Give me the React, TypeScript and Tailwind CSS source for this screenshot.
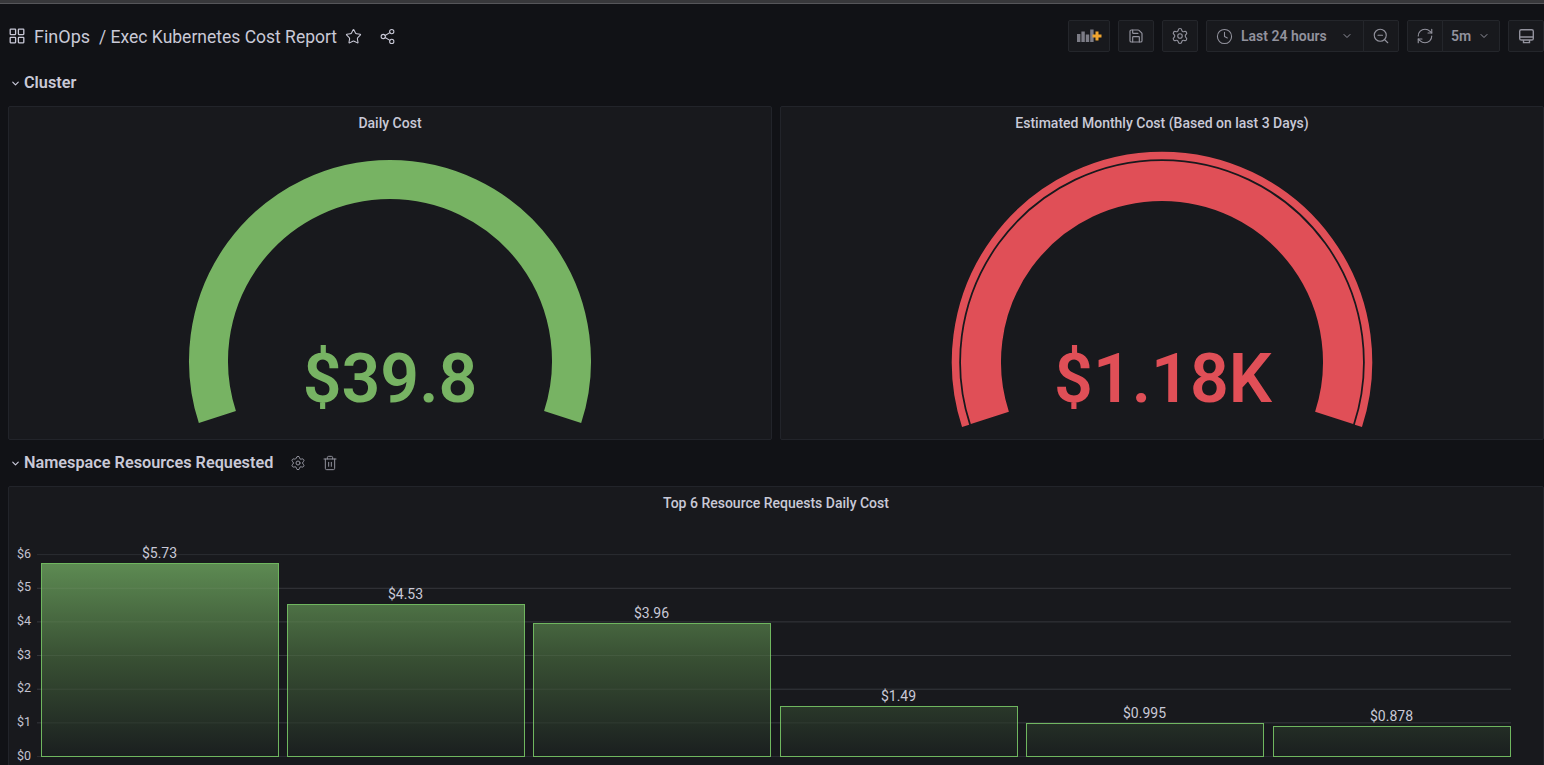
import { ChevronDown, Clock, RefreshCw, Save, Settings, Share2, Star, Trash2, ZoomOut } from "lucide-react";
import type { ReactNode } from "react";

const font = "[font-family:Roboto,'Liberation_Sans',sans-serif]";

const BARS = [
  { x: 41, w: 237, value: 5.75, label: "$5.73" },
  { x: 287, w: 237, value: 4.53, label: "$4.53" },
  { x: 533, w: 237, value: 3.96, label: "$3.96" },
  { x: 780, w: 237, value: 1.49, label: "$1.49" },
  { x: 1026, w: 237, value: 0.995, label: "$0.995" },
  { x: 1273, w: 237, value: 0.9, label: "$0.878" },
];

const ZERO_Y = 756.5;
const UNIT = 33.65;

function arc(cx: number, cy: number, r: number) {
  const dx = r * Math.cos((18 * Math.PI) / 180);
  const dy = r * Math.sin((18 * Math.PI) / 180);
  return `M ${cx - dx} ${cy + dy} A ${r} ${r} 0 1 1 ${cx + dx} ${cy + dy}`;
}

function ToolButton({ children, className = "" }: { children: ReactNode; className?: string }) {
  return (
    <div className={`flex h-8 items-center justify-center rounded-[2px] border border-[#24262b] bg-[#18191d] text-[#92929d] ${className}`}>
      {children}
    </div>
  );
}

function RowTitle({ title, children }: { title: string; children?: ReactNode }) {
  return (
    <div className="flex h-8 items-center pt-[2px]">
      <ChevronDown size={11} strokeWidth={2.5} className="ml-[2px] mr-[3px] text-[#ccccdc]" />
      <span className="text-[16.25px] font-semibold leading-none text-[#c9c9d7]">{title}</span>
      {children}
    </div>
  );
}

function Panel({ title, children, className = "" }: { title: string; children: ReactNode; className?: string }) {
  return (
    <div className={`overflow-hidden rounded-[2px] border border-[#22242a] bg-[#18191d] ${className}`}>
      <div className="flex h-8 items-center justify-center text-[14px] font-medium text-[#c9c9d7]">{title}</div>
      {children}
    </div>
  );
}

function Gauge({ viewBox, color, value, cx, textX, threshold }: { viewBox: string; color: string; value: string; cx: number; textX: number; threshold?: boolean }) {
  return (
    <svg viewBox={viewBox} width="762" height="300" className="block">
      {threshold ? (
        <>
          <path d={arc(cx, 362, 206.5)} fill="none" stroke={color} strokeWidth="7.5" />
          <path d={arc(cx, 362, 181)} fill="none" stroke={color} strokeWidth="40" />
        </>
      ) : (
        <path d={arc(cx, 361, 181.5)} fill="none" stroke={color} strokeWidth="39" />
      )}
      <text x={textX} y="402" textAnchor="middle" fill={color} fontSize="68" fontWeight="600">
        {value}
      </text>
    </svg>
  );
}

function BarChart() {
  return (
    <svg viewBox="9 519 1535 246" width="1535" height="246" className="block">
      <defs>
        <linearGradient id="barFill" gradientUnits="userSpaceOnUse" x1="0" y1="540" x2="0" y2="757">
          <stop offset="0" stopColor="#66995a" />
          <stop offset="0.55" stopColor="#384f33" />
          <stop offset="1" stopColor="#1a1e1f" />
        </linearGradient>
      </defs>
      {[0, 1, 2, 3, 4, 5, 6].map((n) => (
        <text key={n} x="17" y={ZERO_Y - n * UNIT + 3} fontSize="12.5" fill="#c3c3d1">
          ${n}
        </text>
      ))}
      {[0, 1, 2, 3, 4, 5, 6].map((n) => (
        <line key={n} x1="37" x2="1511" y1={ZERO_Y - n * UNIT} y2={ZERO_Y - n * UNIT} stroke="#2b2d32" />
      ))}
      {BARS.map((b) => {
        const top = Math.round(ZERO_Y - b.value * UNIT) + 0.5;
        return (
          <g key={b.label}>
            <rect x={b.x + 0.5} y={top} width={b.w} height={ZERO_Y - top} fill="url(#barFill)" stroke="#6fb65f" />
            <text x={b.x + b.w / 2} y={top - 6} textAnchor="middle" fontSize="14" fill="#c9c9d7">
              {b.label}
            </text>
          </g>
        );
      })}
      {[1, 2, 3, 4, 5].map((n) => (
        <line key={n} x1="37" x2="1511" y1={ZERO_Y - n * UNIT} y2={ZERO_Y - n * UNIT} stroke="#ffffff" strokeOpacity="0.06" />
      ))}
    </svg>
  );
}

export default function App() {
  return (
    <div className={`h-[765px] w-[1544px] overflow-hidden bg-[#111216] ${font}`}>
      <div className="h-1 border-b border-[#56565a] bg-[#38383b]" />

      <header className="mt-4 flex h-8 items-center pl-[9px]">
        <svg width="16" height="16" viewBox="0 0 16 16" fill="none" stroke="#c9c9d7" strokeWidth="1.3">
          <rect x="1.2" y="1.2" width="5.4" height="5.4" rx="0.5" />
          <rect x="9.4" y="1.2" width="5.4" height="5.4" rx="0.5" />
          <rect x="1.2" y="9.4" width="5.4" height="5.4" rx="0.5" />
          <rect x="9.4" y="9.4" width="5.4" height="5.4" rx="0.5" />
        </svg>
        <div className="flex items-baseline pt-px text-[#c9c9d7]">
          <span className="ml-[9px] text-[18px]">FinOps</span>
          <span className="ml-[9px] text-[17.5px]">/ Exec Kubernetes Cost Report</span>
        </div>
        <Star size={17} strokeWidth={1.5} className="ml-2 text-[#c9c9d7]" />
        <Share2 size={17} strokeWidth={1.5} className="ml-[17px] text-[#c9c9d7]" />
        <div className="ml-auto flex items-center gap-2">
          <ToolButton className="w-[42px]">
            <svg width="26" height="16" viewBox="0 0 26 16">
              <g fill="#7c7c86">
                <rect x="1" y="6" width="3.4" height="8" />
                <rect x="5.4" y="3.5" width="3.4" height="10.5" />
                <rect x="9.8" y="6.5" width="3.4" height="7.5" />
                <rect x="14.2" y="1.5" width="3.4" height="12.5" />
              </g>
              <path d="M21 3.5v9M16.5 8h9" stroke="#f0a52f" strokeWidth="3" />
            </svg>
          </ToolButton>
          <ToolButton className="w-9">
            <Save size={16} strokeWidth={1.75} />
          </ToolButton>
          <ToolButton className="w-9">
            <Settings size={18} strokeWidth={1.5} />
          </ToolButton>
          <div className="flex">
            <ToolButton className="w-[158px] justify-start rounded-r-none pl-[9px]">
              <Clock size={17} strokeWidth={1.5} />
              <span className="ml-[8px] text-[14px] font-semibold">Last 24 hours</span>
              <ChevronDown size={12} strokeWidth={2} className="ml-[14px]" />
            </ToolButton>
            <ToolButton className="-ml-px w-[36px] rounded-l-none">
              <ZoomOut size={18} strokeWidth={1.5} />
            </ToolButton>
          </div>
          <div className="flex">
            <ToolButton className="w-[36px] rounded-r-none">
              <RefreshCw size={18} strokeWidth={1.5} />
            </ToolButton>
            <ToolButton className="-ml-px w-[58px] justify-start rounded-l-none pl-2">
              <span className="text-[14px] font-semibold">5m</span>
              <ChevronDown size={12} strokeWidth={2} className="ml-[7px]" />
            </ToolButton>
          </div>
          <ToolButton className="w-9">
            <svg width="17" height="17" viewBox="0 0 17 17" fill="none" stroke="currentColor" strokeWidth="1.4">
              <rect x="1.7" y="1.7" width="13.6" height="10.3" rx="1.6" />
              <path d="M1.7 9h13.6M5.5 12v2.6h6V12" />
            </svg>
          </ToolButton>
        </div>
      </header>

      <main className="mt-[14px] pl-2">
        <RowTitle title="Cluster" />
        <div className="mt-2 grid h-[334px] grid-cols-2 gap-2">
          <Panel title="Daily Cost">
            <Gauge viewBox="9 139 762 300" color="#77b363" value="$39.8" cx={390} textX={390} />
          </Panel>
          <Panel title="Estimated Monthly Cost (Based on last 3 Days)">
            <Gauge viewBox="781 139 762 300" color="#e04f57" value="$1.18K" cx={1162} textX={1163} threshold />
          </Panel>
        </div>
        <div className="mt-[6px]">
          <RowTitle title="Namespace Resources Requested">
            <Settings size={16} strokeWidth={1.5} className="ml-[17px] text-[#92929d]" />
            <Trash2 size={16} strokeWidth={1.5} className="ml-4 text-[#92929d]" />
          </RowTitle>
        </div>
        <Panel title="Top 6 Resource Requests Daily Cost" className="mt-2 h-[300px]">
          <BarChart />
        </Panel>
      </main>
    </div>
  );
}
